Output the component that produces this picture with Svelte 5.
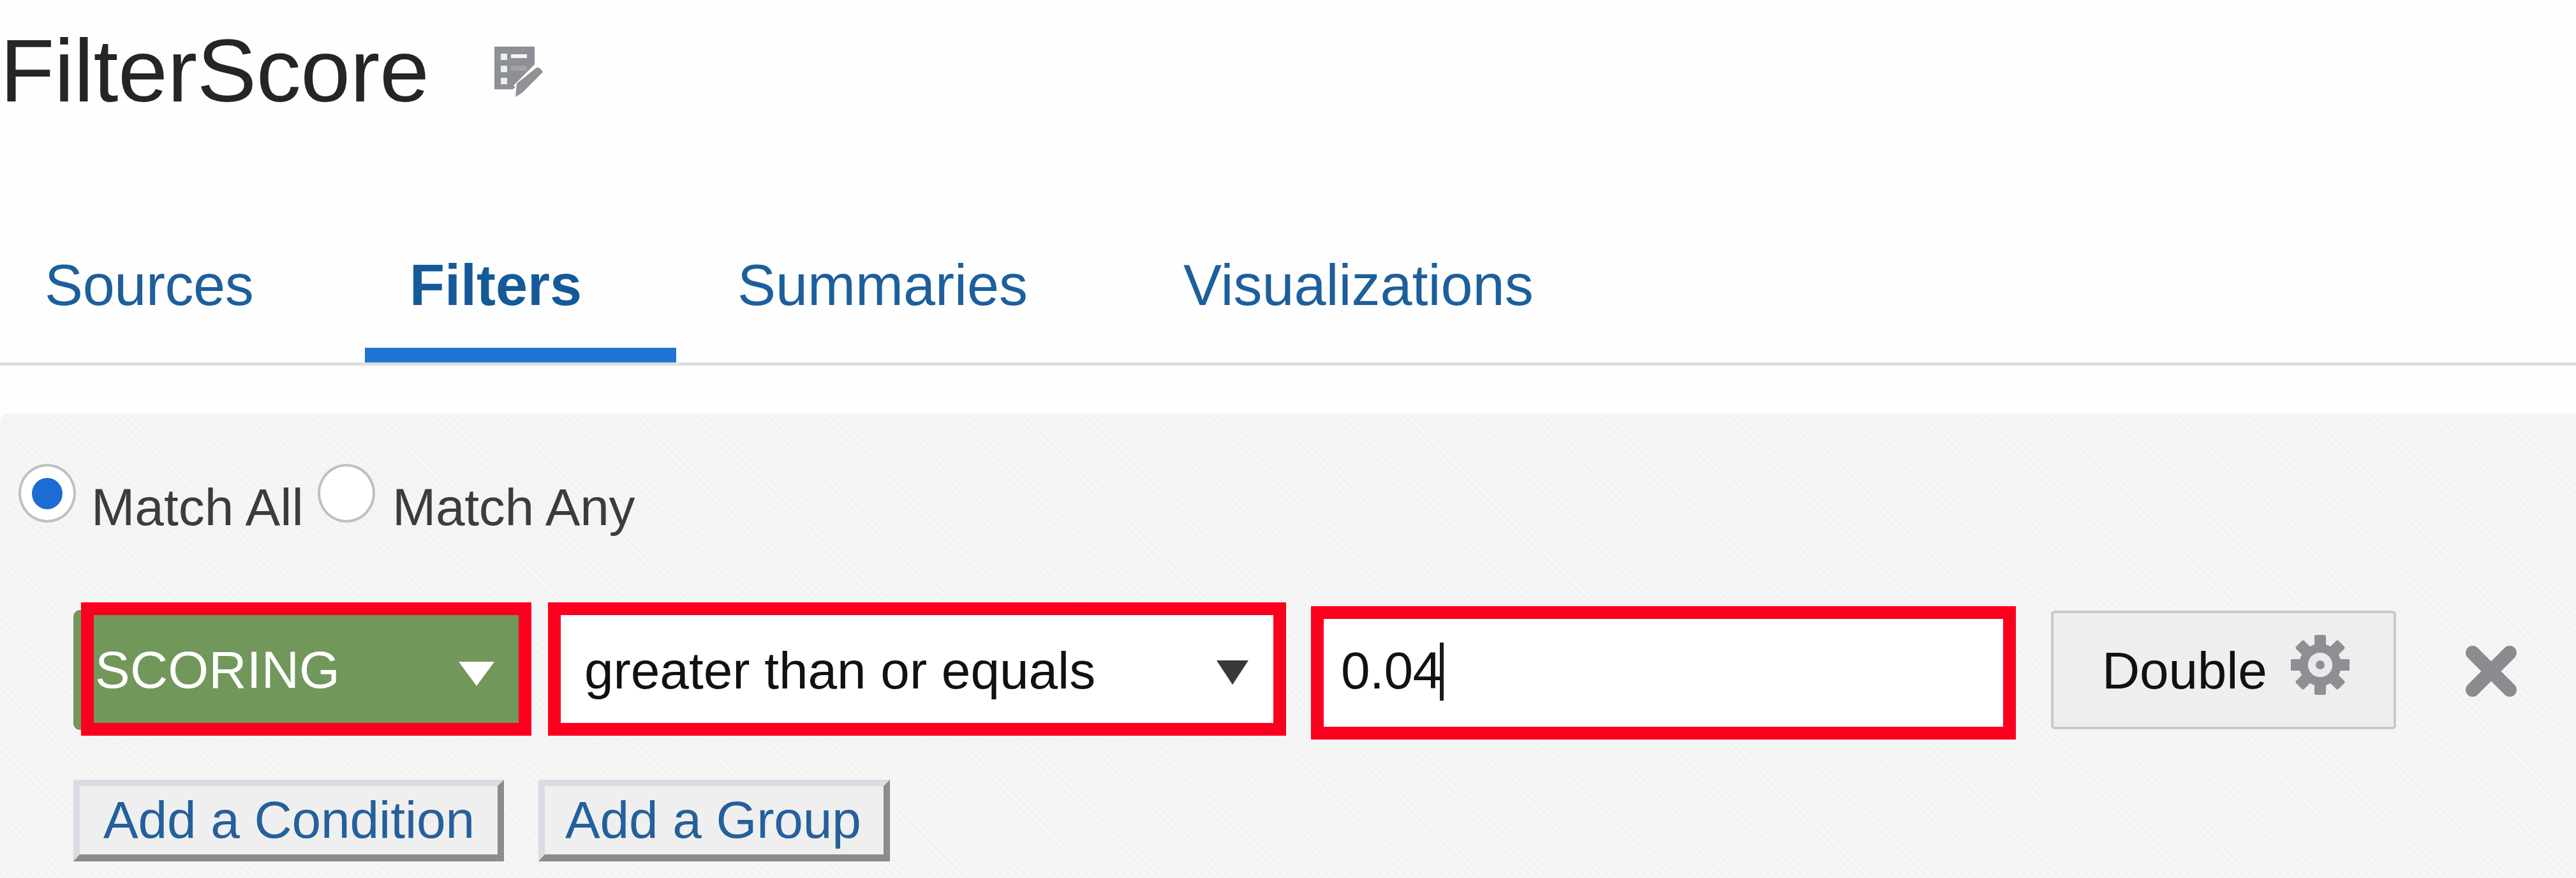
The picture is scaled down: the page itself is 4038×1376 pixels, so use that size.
<script>
  const tabs = [
    { id: 'sources', label: 'Sources' },
    { id: 'filters', label: 'Filters' },
    { id: 'summaries', label: 'Summaries' },
    { id: 'visualizations', label: 'Visualizations' }
  ];
  let active = $state('filters');
  let match = $state('all');
  const teeth = [0, 45, 90, 135, 180, 225, 270, 315];
</script>

<main>
  <header>
    <h1>FilterScore</h1>
    <svg class="edit" viewBox="0 0 80 84" aria-hidden="true">
      <path d="M0 3H63V34L29 70H0Z" fill="#8f9095" />
      <path d="M10 14h10v10H10zM10 33h10v10H10zM10 52h10v10H10z" fill="#e9f1ef" />
      <path d="M26 15h25v6H26z" fill="#f5f5f7" />
      <path d="M26 33h25v8H26z" fill="#a5a0a8" />
      <path d="M30 64L64 30 80 44 46 78Z" fill="#fefefe" />
      <path d="M35 61L66 36 Q71 34 76 43L44 75 33 82Z" fill="#929196" />
    </svg>
  </header>

  <nav>
    {#each tabs as tab}
      <button class="tab {tab.id}" class:active={active === tab.id} onclick={() => (active = tab.id)}>{tab.label}</button>
    {/each}
  </nav>

  <section class="panel">
    <div class="match">
      <button class="radio" class:on={match === 'all'} aria-label="Match All" onclick={() => (match = 'all')}></button>
      <span class="label all">Match All</span>
      <button class="radio" class:on={match === 'any'} aria-label="Match Any" onclick={() => (match = 'any')}></button>
      <span class="label any">Match Any</span>
    </div>

    <div class="condition">
      <div class="column">
        <span class="scoring">SCORING</span>
        <svg class="caret" viewBox="0 0 58 40" aria-hidden="true"><path d="M1 1H57L29 39Z" fill="#fff" /></svg>
        <i class="outline"></i>
      </div>
      <div class="field operator">
        <span>greater than or equals</span>
        <svg class="caret" viewBox="0 0 58 40" aria-hidden="true"><path d="M2 1H52L27 39Z" fill="#38383d" /></svg>
      </div>
      <div class="field value"><span>0.04</span><i class="cursor"></i></div>
      <button class="type">
        <span>Double</span>
        <svg class="gear" viewBox="-46 -48 92 96" aria-hidden="true">
          {#each teeth as angle}
            <rect x="-9" y="-47" width="18" height="24" rx="3" fill="#8d8f94" transform="rotate({angle})" />
          {/each}
          <circle r="26" fill="none" stroke="#8d8f94" stroke-width="14" />
          <circle r="19" fill="#e9eaee" />
          <circle r="7" fill="#8d8f94" />
        </svg>
      </button>
      <svg class="remove" viewBox="0 0 86 88" aria-hidden="true">
        <path d="M14 15L72 73M72 15L14 73" stroke="#8b8c90" stroke-width="22" stroke-linecap="round" />
      </svg>
    </div>

    <div class="actions">
      <button class="add">Add a Condition</button>
      <button class="add group">Add a Group</button>
    </div>
  </section>
</main>

<style>
  :global(body) { margin: 0; background: #fefefe; }
  main {
    width: 4038px;
    height: 1376px;
    overflow: hidden;
    font-family: "Liberation Sans", Arial, sans-serif;
    font-size: 82px;
    color: #111;
  }
  button { font: inherit; color: inherit; margin: 0; padding: 0; border: 0; background: none; text-align: left; white-space: nowrap; }
  span { white-space: nowrap; }
  svg { display: block; flex: none; }

  header { display: flex; align-items: flex-start; height: 367px; padding-top: 31px; box-sizing: border-box; }
  h1 { margin: 0; font-size: 140px; font-weight: 400; line-height: 160px; width: 775px; letter-spacing: -0.4px; color: #242526; }
  .edit { width: 80px; height: 84px; margin-top: 39px; }

  nav { display: flex; height: 201px; border-bottom: 5px solid #dedee0; }
  .tab { position: relative; box-sizing: border-box; height: 201px; padding: 30px 0 71px; font-size: 90px; line-height: 100px; color: #1c5f9c; }
  .tab.active { font-weight: 700; color: #145a98; }
  .tab.active::after { content: ""; position: absolute; left: 0; right: 0; bottom: 0; height: 23px; background: #2074d5; }
  .sources { width: 572px; padding-left: 70px; letter-spacing: -0.4px; }
  .filters { width: 488px; padding-left: 70px; }
  .summaries { width: 701px; padding-left: 96px; }
  .visualizations { width: 740px; padding-left: 94px; }

  .panel {
    box-sizing: border-box;
    height: 728px;
    margin-top: 75px;
    padding-top: 79px;
    border-radius: 14px 0 0 0;
    background: repeating-linear-gradient(45deg, #f7f7f7 0, #f2f2f2 4.3px, #f7f7f7 8.6px);
  }
  .match { display: flex; align-items: flex-start; height: 217px; padding-left: 29px; color: #3c3c3e; }
  .radio { box-sizing: border-box; width: 90px; height: 92px; border: 4px solid #c0c0c2; border-radius: 50%; background: #fff; display: grid; place-items: center; flex: none; }
  .radio.on::after { content: ""; width: 48px; height: 49px; border-radius: 50%; background: #1d6bd3; }
  .label { margin-top: 22px; line-height: 92px; }
  .all { width: 355px; margin-left: 24px; }
  .any { margin-left: 27px; letter-spacing: -0.3px; }

  .condition { display: flex; align-items: flex-start; height: 278px; padding-left: 115px; }
  .column { position: relative; box-sizing: border-box; display: flex; align-items: center; width: 718px; height: 188px; margin-top: 12px; padding-left: 34px; background: #71975a; border-radius: 10px; color: #fff; }
  .scoring { width: 569px; letter-spacing: 0.2px; }
  .caret { width: 58px; height: 40px; margin-top: 11px; }
  .outline { position: absolute; left: 12px; top: -12px; width: 706px; height: 209px; box-sizing: border-box; border: 20px solid #fb001e; }
  .field { box-sizing: border-box; display: flex; align-items: center; height: 209px; border: 20px solid #fb001e; background: #fff; }
  .operator { width: 1157px; margin-left: 26px; padding: 4px 0 0 37px; }
  .operator span { width: 989px; letter-spacing: -0.05px; }
  .operator .caret { margin-top: 7px; }
  .value { width: 1105px; margin: 6px 0 0 39px; padding: 0 0 8px 27px; }
  .value span { letter-spacing: -0.5px; }
  .cursor { width: 6px; height: 91px; margin: 3px 0 0 -3px; background: #1a1a1a; }
  .type { box-sizing: border-box; display: flex; align-items: center; width: 541px; height: 186px; margin: 13px 0 0 55px; padding: 2px 0 0 76px; border: 4px solid #c9c9ca; border-radius: 6px; background: #eee; }
  .type span { width: 296px; letter-spacing: -0.2px; }
  .gear { width: 92px; height: 96px; margin-top: -18px; }
  .remove { width: 86px; height: 88px; margin: 64px 0 0 106px; }

  .actions { display: flex; gap: 54px; padding-left: 115px; }
  .add { box-sizing: border-box; width: 675px; height: 128px; padding: 0 0 2px 37px; border: 10px solid; border-width: 10px 10px 11px; border-color: #dadce3 #8b8c8d #8b8c8d #dadce3; background: #efeff0; color: #24609b; line-height: 105px; letter-spacing: -0.1px; }
  .group { width: 551px; padding-left: 32px; }
</style>
